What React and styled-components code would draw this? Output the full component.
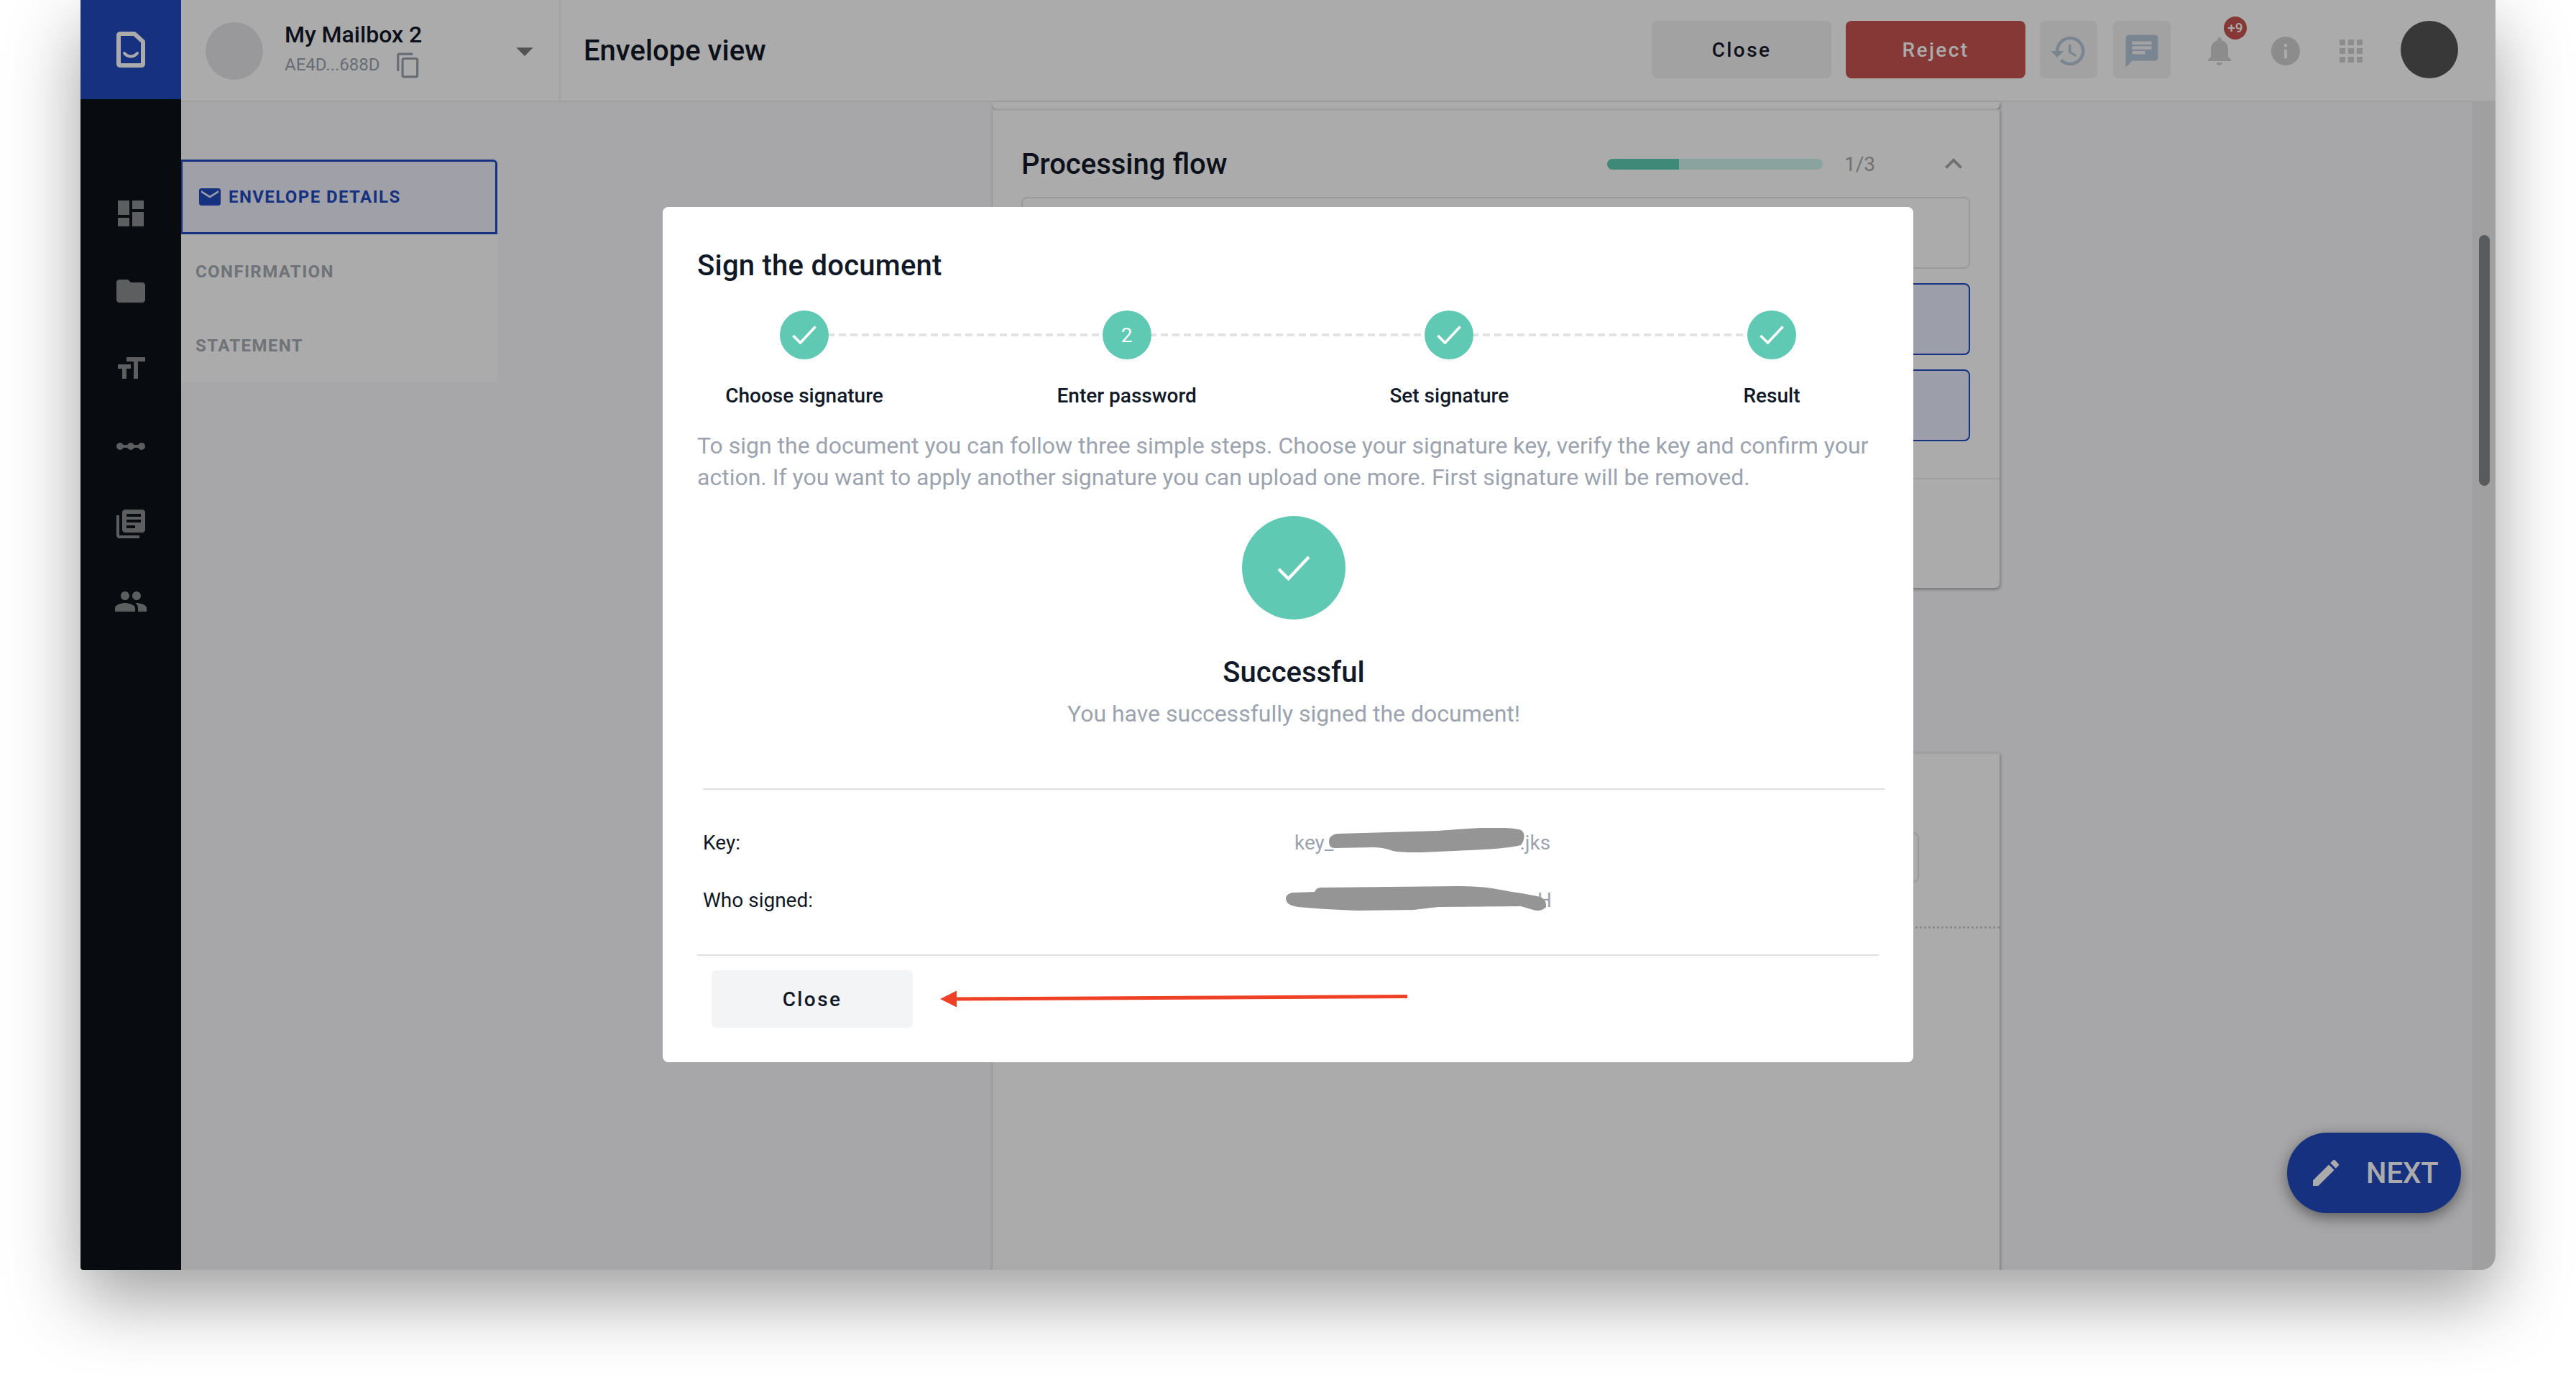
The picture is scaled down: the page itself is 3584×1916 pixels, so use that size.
import React from 'react'
import styled, { createGlobalStyle } from 'styled-components'
import {
  MdDashboard,
  MdFolder,
  MdFormatSize,
  MdLinearScale,
  MdLibraryBooks,
  MdPeople,
  MdEmail,
  MdContentCopy,
  MdArrowDropDown,
  MdHistory,
  MdChat,
  MdNotifications,
  MdInfo,
  MdApps,
  MdExpandLess,
  MdEdit,
} from 'react-icons/md'

const Global = createGlobalStyle`
  html, body {
    margin: 0;
    padding: 0;
    background: #fff;
    height: 1916px;
    overflow: hidden;
    font-family: Roboto, "Liberation Sans", sans-serif;
  }
  * { box-sizing: border-box; }
`

const Window = styled.div`
  position: relative;
  display: flex;
  width: 3360px;
  height: 1767px;
  margin-left: 112px;
  background: #f9f9fc;
  border-bottom-right-radius: 20px;
  border-bottom-left-radius: 4px;
  overflow: hidden;
  box-shadow: 0 40px 100px rgba(0, 0, 0, 0.38);
`

const Sidebar = styled.aside`
  flex: 0 0 140px;
  background: #0c1117;
  display: flex;
  flex-direction: column;
  align-items: center;
`

const LogoBlock = styled.div`
  width: 100%;
  height: 138px;
  background: #2249be;
  display: flex;
  align-items: center;
  justify-content: center;
  color: #fff;
`

const NavList = styled.nav`
  display: flex;
  flex-direction: column;
  gap: 60px;
  padding-top: 135px;
  color: #8b8d90;
  font-size: 48px;
  svg { display: block; }
`

const Main = styled.div`
  flex: 1;
  display: flex;
  flex-direction: column;
  min-width: 0;
`

const Header = styled.header`
  flex: 0 0 142px;
  background: #fff;
  border-bottom: 2px solid #efefef;
  display: flex;
  align-items: stretch;
`

const MailboxBlock = styled.div`
  flex: 0 0 528px;
  display: flex;
  align-items: center;
  padding-left: 34px;
  border-right: 2px solid #efefef;
  margin-bottom: -2px;
`

const Avatar = styled.div`
  width: 80px;
  height: 80px;
  border-radius: 50%;
  flex: none;
  margin-left: ${(props) => props.gap || 0}px;
  background: ${(props) => props.color};
`

const MailboxText = styled.div`
  margin-left: 30px;
  margin-top: -4px;
  width: 320px;
`

const MailboxName = styled.div`
  font-size: 32px;
  font-weight: 500;
  line-height: 40px;
  color: #111827;
`

const MailboxId = styled.div`
  display: flex;
  align-items: center;
  margin-top: 2px;
  font-size: 24px;
  line-height: 36px;
  color: #9ca3af;
  svg { margin-left: 20px; font-size: 38px; margin-top: 2px; }
`

const Caret = styled.div`
  font-size: 56px;
  color: #7d7d7d;
  margin-left: -14px;
  svg { display: block; }
`

const PageTitle = styled.h1`
  margin: 0 0 0 32px;
  align-self: center;
  font-size: 40px;
  font-weight: 500;
  color: #111827;
`

const Actions = styled.div`
  margin-left: auto;
  display: flex;
  align-items: center;
  padding-right: 52px;
  margin-top: -2px;
`

const TextButton = styled.button`
  width: 250px;
  height: 80px;
  margin-right: 20px;
  border: none;
  border-radius: 8px;
  font-family: inherit;
  font-size: 28px;
  font-weight: 500;
  letter-spacing: 2.4px;
  background: ${(props) => (props.danger ? '#c65450' : '#f2f2f3')};
  color: ${(props) => (props.danger ? '#fff' : '#111827')};
`

const IconButton = styled.div`
  width: 80px;
  height: 80px;
  margin-right: 22px;
  padding-top: 4px;
  border-radius: 8px;
  background: #f2f2f3;
  display: flex;
  align-items: center;
  justify-content: center;
  color: #b7c6da;
  font-size: 54px;
`

const Bell = styled.div`
  position: relative;
  width: 48px;
  margin-left: 22px;
  font-size: 56px;
  color: #d1d1d1;
  display: flex;
  justify-content: center;
  svg { margin-top: 4px; }
`

const BadgeCount = styled.span`
  position: absolute;
  top: -16px;
  left: 30px;
  width: 32px;
  height: 32px;
  border-radius: 50%;
  background: #c65450;
  color: #fff;
  font-size: 19px;
  font-weight: 500;
  line-height: 32px;
  text-align: center;
`

const PlainIcon = styled.div`
  margin-left: ${(props) => props.gap}px;
  margin-top: 4px;
  font-size: 48px;
  line-height: 0;
  color: #d1d1d1;
`

const Body = styled.div`
  flex: 1;
  display: flex;
  min-height: 0;
`

const SubNav = styled.div`
  flex: 0 0 440px;
  height: 310px;
  margin-top: 80px;
  background: #fff;
`

const Tab = styled.div`
  height: ${(props) => (props.active ? 104 : 103)}px;
  display: flex;
  align-items: center;
  padding-left: 20px;
  font-size: 24px;
  font-weight: 700;
  letter-spacing: 1.4px;
  color: ${(props) => (props.active ? '#2249be' : '#a6acb2')};
  background: ${(props) => (props.active ? '#eff1fb' : 'transparent')};
  border: ${(props) => (props.active ? '3px solid #2249be' : 'none')};
  border-left-width: ${(props) => (props.active ? '2px' : '0')};
  border-radius: ${(props) => (props.active ? '0 6px 0 0' : '0')};
  svg { font-size: 36px; margin-right: 8px; }
`

const Content = styled.div`
  flex: 0 0 1401px;
  margin-left: 689px;
`

const Card = styled.section`
  background: #fff;
  box-shadow: 1px 2px 4px rgba(0, 0, 0, 0.35);
  border-radius: 0 0 6px 6px;
`

const PreviousCard = styled(Card)`
  height: 10px;
`

const FlowCard = styled(Card)`
  height: 666px;
  padding-top: 50px;
  border-top: 2px solid #efefef;
`

const FlowHead = styled.div`
  display: flex;
  align-items: center;
  height: 48px;
  padding: 0 40px;
  margin-bottom: 22px;
`

const FlowTitle = styled.h2`
  margin: 0;
  font-size: 40px;
  font-weight: 500;
  color: #111827;
`

const Progress = styled.div`
  width: 300px;
  height: 15px;
  margin-left: auto;
  border-radius: 8px;
  background: #cef3ec;
  overflow: hidden;
`

const ProgressFill = styled.div`
  height: 100%;
  background: #5fcdb3;
`

const FlowCount = styled.span`
  width: 128px;
  margin-left: 30px;
  font-size: 28px;
  color: #a9a9a9;
`

const Chevron = styled.div`
  font-size: 48px;
  line-height: 0;
  color: #a9a9a9;
`

const FlowBox = styled.div`
  height: 100px;
  margin: 0 41px 20px 40px;
  border-radius: 8px;
  border: 2px solid ${(props) => (props.selected ? '#2249be' : '#e6e6e6')};
  background: ${(props) => (props.selected ? '#e9edfc' : '#fff')};
`

const FlowFooter = styled.div`
  margin-top: 51px;
  border-top: 2px solid #efefef;
`

const FormCard = styled(Card)`
  height: 800px;
  margin-top: 229px;
  padding-top: 109px;
  border-top: 2px solid #efefef;
`

const FormInput = styled.div`
  height: 70px;
  margin: 0 112px 0 40px;
  border: 2px solid #e6e6e6;
  border-radius: 8px;
`

const DottedLine = styled.div`
  margin-top: 61px;
  border-top: 3px dotted #d3d3d3;
`

const ScrollTrack = styled.div`
  flex: 0 0 32px;
  margin-left: auto;
  padding: 185px 8px 0;
  background: #efefef;
  border-left: 1px solid #eaeaea;
`

const ScrollThumb = styled.div`
  height: 349px;
  border-radius: 8px;
  background: #86888a;
`

const Fab = styled.div`
  position: absolute;
  right: 48px;
  bottom: 79px;
  width: 242px;
  height: 112px;
  border-radius: 56px;
  background: #2249be;
  color: #fff;
  display: flex;
  align-items: center;
  padding-left: 30px;
  font-size: 40px;
  font-weight: 500;
  box-shadow: 0 6px 20px rgba(0, 0, 0, 0.45);
  svg { font-size: 48px; margin-right: 32px; }
`

const Overlay = styled.div`
  position: absolute;
  inset: 0;
  background: rgba(0, 0, 0, 0.33);
  display: flex;
  align-items: center;
  justify-content: center;
`

const Modal = styled.div`
  width: 1740px;
  height: 1190px;
  margin-top: -1px;
  padding: 58px 48px 0;
  background: #fff;
  border-radius: 8px;
`

const ModalTitle = styled.h2`
  margin: 0;
  font-size: 40px;
  line-height: 48px;
  font-weight: 500;
  letter-spacing: 0.25px;
  color: #111827;
`

const Stepper = styled.div`
  position: relative;
  display: flex;
  justify-content: space-between;
  margin-top: 38px;
  &::before {
    content: '';
    position: absolute;
    top: 32px;
    left: 149px;
    right: 149px;
    height: 4px;
    background: repeating-linear-gradient(90deg, #e2e2e2 0 10px, transparent 10px 16px);
  }
`

const Step = styled.div`
  position: relative;
  width: 298px;
  display: flex;
  flex-direction: column;
  align-items: center;
`

const StepCircle = styled.div`
  width: 68px;
  height: 68px;
  border-radius: 50%;
  background: #60c9b3;
  color: #fff;
  font-size: 28px;
  display: flex;
  align-items: center;
  justify-content: center;
`

const StepLabel = styled.div`
  margin-top: 35px;
  font-size: 28px;
  line-height: 32px;
  font-weight: 500;
  color: #111827;
`

const Intro = styled.p`
  margin: 31px 0 0;
  font-size: 32px;
  line-height: 44px;
  color: #9ca3af;
`

const ResultBlock = styled.div`
  display: flex;
  flex-direction: column;
  align-items: center;
  margin-top: 32px;
  padding-left: 16px;
`

const ResultCircle = styled.div`
  width: 144px;
  height: 144px;
  border-radius: 50%;
  background: #60c9b3;
  display: flex;
  align-items: center;
  justify-content: center;
`

const ResultTitle = styled.div`
  margin-top: 50px;
  font-size: 40px;
  line-height: 48px;
  font-weight: 500;
  color: #111827;
`

const ResultText = styled.div`
  margin-top: 11px;
  font-size: 32px;
  line-height: 44px;
  color: #9ca3af;
`

const Rule = styled.div`
  height: 2px;
  background: #e0e0e0;
  margin-left: ${(props) => props.indent || 0}px;
  margin-right: ${(props) => (props.indent ? -props.indent : 0)}px;
  margin-top: ${(props) => props.top}px;
`

const InfoRows = styled.div`
  padding: 53px 0 0 8px;
  display: flex;
  flex-direction: column;
  gap: 40px;
`

const InfoRow = styled.div`
  display: grid;
  grid-template-columns: 823px 1fr;
  height: 40px;
  align-items: center;
  font-size: 28px;
`

const InfoLabel = styled.div`
  color: #111827;
`

const InfoValue = styled.div`
  display: flex;
  align-items: center;
  color: #9ca3af;
  svg { flex: none; }
`

const ModalFooter = styled.div`
  display: flex;
  align-items: center;
  padding: 20px 0 0 20px;
`

const FooterClose = styled.button`
  width: 280px;
  height: 80px;
  border: none;
  border-radius: 6px;
  background: #f3f4f6;
  color: #111827;
  font-family: inherit;
  font-size: 28px;
  font-weight: 500;
  letter-spacing: 2.4px;
`

const ArrowSvg = styled.svg`
  margin-left: 38px;
  margin-top: -2px;
`

const BlobSvg = styled.svg`
  margin: ${(props) => props.$margin};
  position: relative;
`

const Logo = () => (
  <svg width="40" height="50" viewBox="0 0 40 50" fill="none" stroke="currentColor" strokeWidth="6">
    <path d="M3 5 a2 2 0 0 1 2-2 H25 L37 14 V45 a2 2 0 0 1-2 2 H5 a2 2 0 0 1-2-2 Z" strokeLinejoin="round" />
    <path d="M11 30 C16 36 24 36 29 30" strokeWidth="4" strokeLinecap="round" />
  </svg>
)

const Tick = ({ w = 34, h = 26, sw = 3.6 }) => (
  <svg width={w} height={h} viewBox="0 0 34 26" fill="none" stroke="#fff" strokeWidth={sw} preserveAspectRatio="none">
    <path d="M1.5 14 L11.5 24 L32.5 1.5" />
  </svg>
)

const KeyBlob = () => (
  <BlobSvg width="273" height="34" viewBox="0 0 273 34" $margin="-6px -8px 0 -6px">
    <path
      d="M0 19 C0 12 6 8 14 8 L152 4 C180 2 200 0 221 0 C245 -1 262 1 267 3 C273 6 273 16 267 24 C250 28 220 30 197 31 L129 34 C110 34 100 34 89 32 C78 28 70 27 60 27 L8 28 C2 28 0 24 0 19 Z"
      fill="#959595"
    />
  </BlobSvg>
)

const SignerBlob = () => (
  <BlobSvg width="362" height="34" viewBox="0 0 362 34" $margin="-4px -12px 0 -12px">
    <path
      d="M0 16 C2 11 6 9 11 9 L40 8 C42 4 44 2 50 2 L241 0 C265 0 285 2 304 6 C325 10 345 12 356 16 C362 20 363 27 362 29 C358 34 350 35 344 33 L327 28 L212 29 C200 30 190 32 178 33 L98 34 C70 33 40 31 17 29 C5 27 0 24 0 16 Z"
      fill="#959595"
    />
  </BlobSvg>
)

const steps = [
  { label: 'Choose signature' },
  { label: 'Enter password', number: 2 },
  { label: 'Set signature' },
  { label: 'Result' },
]

const App = () => {
  return (
    <>
      <Global />
      <Window>
        <Sidebar>
          <LogoBlock>
            <Logo />
          </LogoBlock>
          <NavList>
            <MdDashboard />
            <MdFolder />
            <MdFormatSize />
            <MdLinearScale />
            <MdLibraryBooks />
            <MdPeople />
          </NavList>
        </Sidebar>
        <Main>
          <Header>
            <MailboxBlock>
              <Avatar color="#e5e5e8" />
              <MailboxText>
                <MailboxName>My Mailbox 2</MailboxName>
                <MailboxId>
                  AE4D...688D
                  <MdContentCopy />
                </MailboxId>
              </MailboxText>
              <Caret>
                <MdArrowDropDown />
              </Caret>
            </MailboxBlock>
            <PageTitle>Envelope view</PageTitle>
            <Actions>
              <TextButton>Close</TextButton>
              <TextButton danger>Reject</TextButton>
              <IconButton>
                <MdHistory />
              </IconButton>
              <IconButton>
                <MdChat />
              </IconButton>
              <Bell>
                <MdNotifications />
                <BadgeCount>+9</BadgeCount>
              </Bell>
              <PlainIcon gap={44}>
                <MdInfo />
              </PlainIcon>
              <PlainIcon gap={43}>
                <MdApps />
              </PlainIcon>
              <Avatar color="#545454" gap={45} />
            </Actions>
          </Header>
          <Body>
            <SubNav>
              <Tab active>
                <MdEmail />
                ENVELOPE DETAILS
              </Tab>
              <Tab>CONFIRMATION</Tab>
              <Tab>STATEMENT</Tab>
            </SubNav>
            <Content>
              <PreviousCard />
              <FlowCard>
                <FlowHead>
                  <FlowTitle>Processing flow</FlowTitle>
                  <Progress>
                    <ProgressFill style={{ width: '33.3%' }} />
                  </Progress>
                  <FlowCount>1/3</FlowCount>
                  <Chevron>
                    <MdExpandLess />
                  </Chevron>
                </FlowHead>
                <FlowBox />
                <FlowBox selected />
                <FlowBox selected />
                <FlowFooter />
              </FlowCard>
              <FormCard>
                <FormInput />
                <DottedLine />
              </FormCard>
            </Content>
            <ScrollTrack>
              <ScrollThumb />
            </ScrollTrack>
          </Body>
        </Main>
        <Fab>
          <MdEdit />
          NEXT
        </Fab>
        <Overlay>
          <Modal>
            <ModalTitle>Sign the document</ModalTitle>
            <Stepper>
              {steps.map((step) => (
                <Step key={step.label}>
                  <StepCircle>{step.number ? step.number : <Tick />}</StepCircle>
                  <StepLabel>{step.label}</StepLabel>
                </Step>
              ))}
            </Stepper>
            <Intro>
              To sign the document you can follow three simple steps. Choose your signature key, verify the key and confirm your action. If you want to apply another signature you can upload one more. First signature will be removed.
            </Intro>
            <ResultBlock>
              <ResultCircle>
                <Tick w={46} h={35} sw={3.2} />
              </ResultCircle>
              <ResultTitle>Successful</ResultTitle>
              <ResultText>You have successfully signed the document!</ResultText>
            </ResultBlock>
            <Rule top={82} indent={8} />
            <InfoRows>
              <InfoRow>
                <InfoLabel>Key:</InfoLabel>
                <InfoValue>
                  key_
                  <KeyBlob />
                  .jks
                </InfoValue>
              </InfoRow>
              <InfoRow>
                <InfoLabel>Who signed:</InfoLabel>
                <InfoValue>
                  <SignerBlob />H
                </InfoValue>
              </InfoRow>
            </InfoRows>
            <Rule top={56} />
            <ModalFooter>
              <FooterClose>Close</FooterClose>
              <ArrowSvg width="650" height="24" viewBox="0 0 650 24">
                <path d="M0 13 L23 1.5 V10.5 L650 7 V12 L23 15.5 V24.5 Z" fill="#ee4025" />
              </ArrowSvg>
            </ModalFooter>
          </Modal>
        </Overlay>
      </Window>
    </>
  )
}

export default App
